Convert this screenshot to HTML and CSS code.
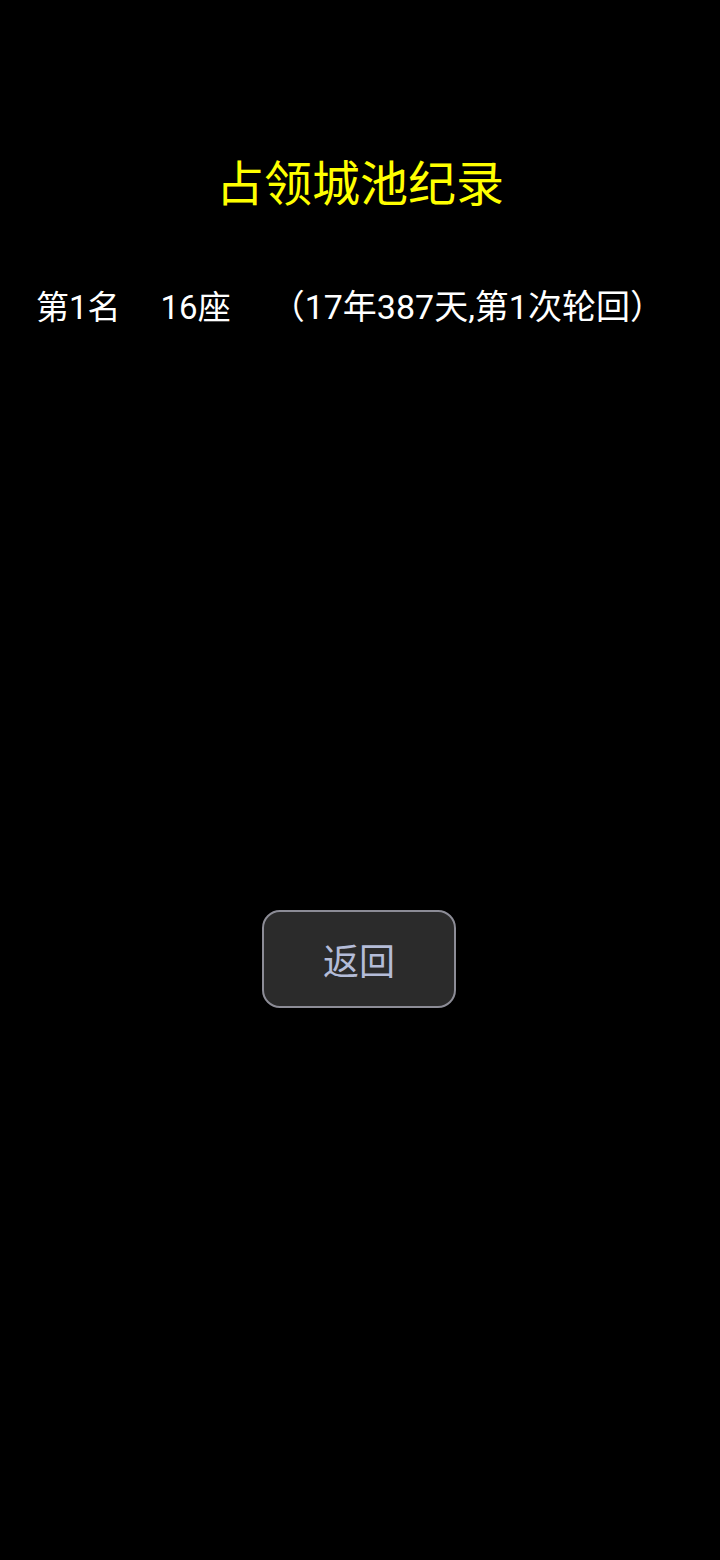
FILE: index.html
```html
<!DOCTYPE html>
<html lang="zh-CN">
<head>
    <meta charset="UTF-8">
    <title>占领城池纪录</title>
    <link rel="stylesheet" href="styles.css">
</head>
<body>
    <div class="page">
        <h1 class="title">占领城池纪录</h1>
        <ul class="records">
            <li class="record">
                <span class="rank">第1名</span>
                <span class="count">16座</span>
                <span class="info">（17年387天,第1次轮回）</span>
            </li>
        </ul>
        <div class="actions">
            <button type="button" class="back">返回</button>
        </div>
    </div>
</body>
</html>
```

FILE: styles.css
```css
* {
    padding: 0;
    margin: 0;
    box-sizing: border-box;
}
html, body {
    background: #000;
}
body {
    width: 720px;
    height: 1560px;
    font-family: Roboto, "Noto Sans CJK SC", sans-serif;
    color: #fff;
}
.page {
    display: flex;
    flex-direction: column;
}
.title {
    margin-top: 147px;
    height: 66px;
    line-height: 66px;
    text-align: center;
    font-family: "Noto Sans CJK SC", sans-serif;
    font-size: 48px;
    font-weight: normal;
    color: #ffff00;
}
.records {
    list-style-type: none;
    margin-top: 69px;
    padding-left: 36px;
}
.record {
    display: flex;
    align-items: baseline;
    height: 50px;
    line-height: 50px;
    font-size: 33px;
}
.record .count {
    margin-left: 40px;
}
.record .info {
    margin-left: 40px;
    font-size: 34px;
}
.actions {
    display: flex;
    justify-content: center;
    margin-top: 578px;
}
.back {
    width: 194px;
    height: 98px;
    margin-left: -2px;
    background-color: #2b2b2b;
    border: 2px solid #8c8c96;
    border-radius: 18px;
    color: #b4bcd8;
    font-family: "Noto Sans CJK SC", sans-serif;
    font-size: 36px;
}
```
